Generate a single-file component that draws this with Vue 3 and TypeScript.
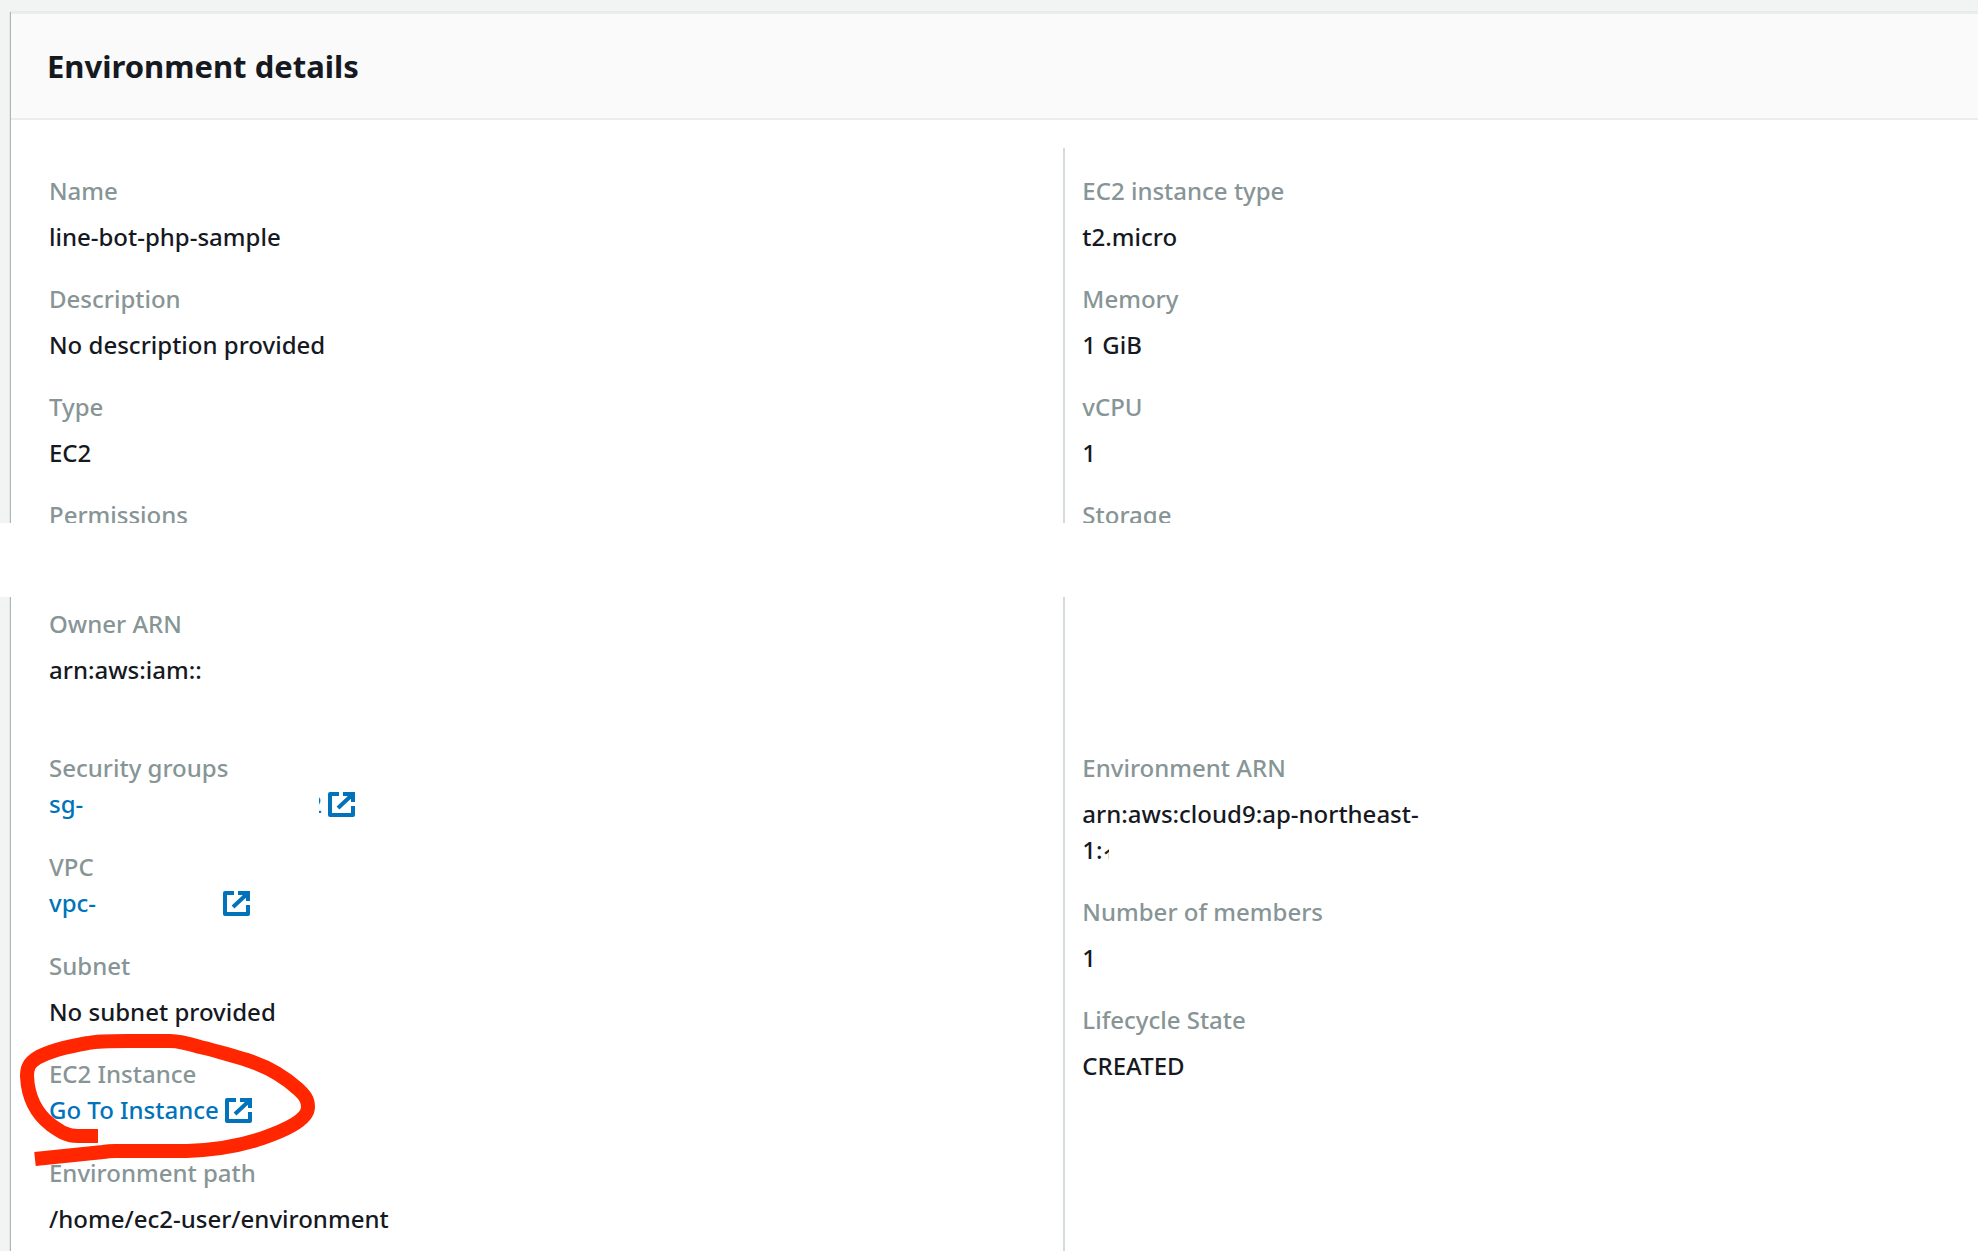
<script setup lang="ts">
interface Detail {
  label: string
  value?: string
  link?: string
  tail?: string
  gap?: 'wide' | 'medium'
  spaced?: boolean
  marked?: boolean
  cutTail?: string
}

const summaryLeft: Detail[] = [
  { label: 'Name', value: 'line-bot-php-sample' },
  { label: 'Description', value: 'No description provided' },
  { label: 'Type', value: 'EC2' },
  { label: 'Permissions' },
]
const summaryRight: Detail[] = [
  { label: 'EC2 instance type', value: 't2.micro' },
  { label: 'Memory', value: '1 GiB' },
  { label: 'vCPU', value: '1' },
  { label: 'Storage' },
]
const networkLeft: Detail[] = [
  { label: 'Owner ARN', value: 'arn:aws:iam::', spaced: true },
  { label: 'Security groups', link: 'sg-', gap: 'wide', tail: '2' },
  { label: 'VPC', link: 'vpc-', gap: 'medium' },
  { label: 'Subnet', value: 'No subnet provided' },
  { label: 'EC2 Instance', link: 'Go To Instance', marked: true },
  { label: 'Environment path', value: '/home/ec2-user/environment' },
]
const networkRight: Detail[] = [
  { label: 'Environment ARN', value: 'arn:aws:cloud9:ap-northeast-1:', cutTail: '1' },
  { label: 'Number of members', value: '1' },
  { label: 'Lifecycle State', value: 'CREATED' },
]

const slices = [
  { name: 'summary', columns: [summaryLeft, summaryRight] },
  { name: 'network', columns: [networkLeft, networkRight] },
]
</script>

<template>
  <main class="page">
    <section v-for="slice in slices" :key="slice.name" class="slice" :class="slice.name">
      <div class="panel">
        <header v-if="slice.name === 'summary'" class="panel-header">
          <h2>Environment details</h2>
        </header>
        <div class="columns">
          <dl v-for="(column, c) in slice.columns" :key="c" class="column">
            <div
              v-for="item in column"
              :key="item.label"
              class="item"
              :class="{ 'has-link': item.link, spaced: item.spaced }"
            >
              <dt>{{ item.label }}</dt>
              <dd v-if="item.value" class="value">
                {{ item.value }}<span v-if="item.cutTail" class="cut-tail">{{ item.cutTail }}</span>
              </dd>
              <dd v-if="item.link">
                <a href="#" class="link" :class="item.gap">
                  <span class="link-text">{{ item.link }}</span>
                  <span v-if="item.tail" class="tail"><span>{{ item.tail }}</span></span>
                  <svg class="external" viewBox="0 0 27 25" aria-hidden="true">
                    <path d="M11 2H2V23H25V14" fill="none" stroke="currentColor" stroke-width="4" stroke-linejoin="round" />
                    <path d="M15 2H25V10" fill="none" stroke="currentColor" stroke-width="4" />
                    <path d="M18 3H25V9Z" fill="currentColor" />
                    <path d="M10 16L24 3" fill="none" stroke="currentColor" stroke-width="4" />
                  </svg>
                </a>
              </dd>
              <svg v-if="item.marked" class="marker" viewBox="0 1020 340 160" aria-hidden="true">
                <path
                  d="M35 1159L103 1152Q109 1151 115 1151H187C215 1150 240 1146 263 1138C280 1132 308 1121 308 1107C308 1098 303 1094 298 1089C285 1077 266 1066 247 1060C230 1055 214 1050 200 1047C190 1044 180 1041 170 1041H127C110 1041 98 1041 88 1043C65 1047 47 1052 37 1058C29 1063 27 1068 27 1076C28 1099 38 1115 51 1125C61 1132 67 1136 78 1136H98"
                />
              </svg>
            </div>
          </dl>
        </div>
      </div>
    </section>
  </main>
</template>

<style>
body {
  margin: 0;
  background: #fff;
}
</style>

<style scoped>
.page {
  display: flex;
  flex-direction: column;
  gap: 74px;
  min-height: 100vh;
  font-family: "Noto Sans", "Open Sans", sans-serif;
  font-size: 24px;
  font-weight: 500;
  line-height: 36px;
  color: #16191f;
}
.slice {
  display: flex;
  flex-direction: column;
  box-sizing: border-box;
  padding-left: 11px;
  background: #f2f3f3;
  overflow: hidden;
}
.summary {
  height: 523px;
  padding-top: 12px;
}
.network {
  flex: 1;
}
.panel {
  display: flex;
  flex: 1;
  flex-direction: column;
  background: #fff;
  box-shadow: -1px 0 1px #aab7b8;
}
.panel-header {
  padding: 32px 36px;
  border-top: 2px solid #eaeded;
  border-bottom: 2px solid #eaeded;
  background: #fafafa;
}
h2 {
  margin: 0;
  font-size: 31px;
  line-height: 40px;
  font-weight: 700;
}
.columns {
  display: grid;
  flex: 1;
  grid-template-columns: 53.5% 1fr;
}
.summary .columns {
  margin-top: 28px;
}
.column {
  margin: 0;
  padding: 25px 17px 0;
}
.column:first-child {
  padding-left: 38px;
}
.column + .column {
  border-left: 2px solid #d5dbdb;
}
.network .column {
  padding-top: 9px;
}
.network .column + .column {
  padding-top: 153px;
}
.item {
  position: relative;
  margin-bottom: 26px;
}
.item.has-link {
  margin-bottom: 27px;
}
.item.spaced {
  margin-bottom: 62px;
}
.item:last-child {
  margin-bottom: 0;
}
dt {
  color: #879596;
}
dd {
  margin: 0;
}
.value {
  max-width: 350px;
  padding-top: 10px;
}
.cut-tail {
  display: inline-block;
  width: 6px;
  height: 20px;
  overflow: hidden;
}
.link {
  display: flex;
  align-items: center;
  gap: 6px;
  width: fit-content;
  color: #0073bb;
  text-decoration: none;
}
.wide .link-text {
  width: 264px;
}
.medium .link-text {
  width: 168px;
}
.tail {
  display: flex;
  justify-content: flex-end;
  width: 3px;
  overflow: hidden;
}
.external {
  width: 27px;
  height: 25px;
}
.marker {
  position: absolute;
  top: -36px;
  left: -49px;
  width: 340px;
  height: 160px;
  pointer-events: none;
}
.marker path {
  fill: none;
  stroke: #ff2600;
  stroke-width: 14;
}
</style>
